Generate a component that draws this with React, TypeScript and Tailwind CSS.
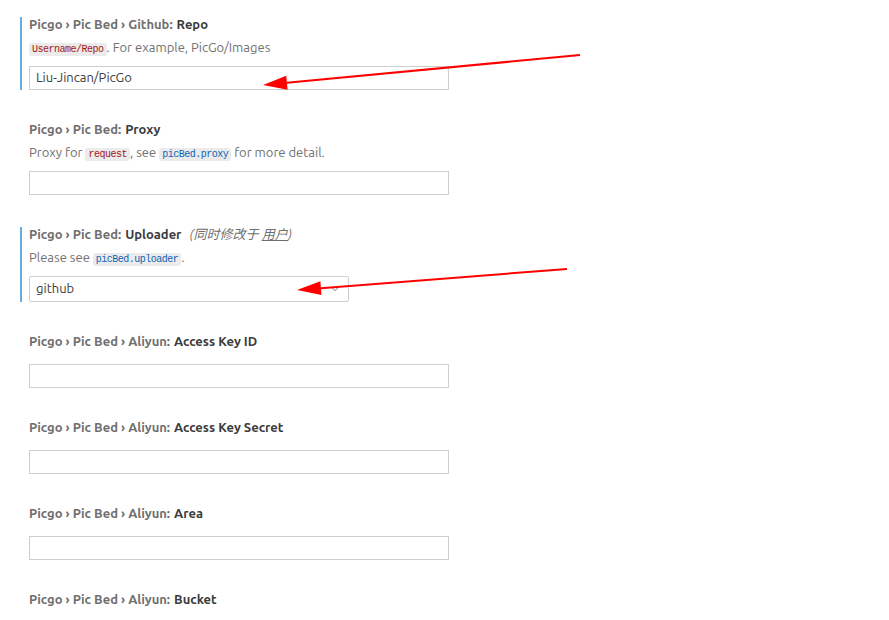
import { ChevronDown } from "lucide-react";

const font = { fontFamily: "Ubuntu, 'Noto Sans', 'Noto Sans CJK SC', sans-serif" };

const Code = ({ children, tone }: { children: string; tone: "red" | "blue" }) => (
  <code
    className={`rounded-[3px] bg-[#ebebeb] px-[3px] py-[1px] text-[10px] tracking-[-0.5px] font-['Liberation_Mono',monospace] ${
      tone === "red" ? "text-[#a31515]" : "text-[#0f63b5]"
    }`}
  >
    {children}
  </code>
);

const Title = ({ path, name, extra }: { path: string; name: string; extra?: boolean }) => (
  <div className="flex h-[14px] items-center text-[13px] leading-[14px] font-bold text-[#6f6f6f]">
    <span>{path}</span>
    <span className="ml-[4px] text-[#3c3c3c]">{name}</span>
    {extra && (
      <span className="ml-[8px] font-normal italic text-[#6f6f6f]">
        (同时修改于 <span className="underline">用户</span>)
      </span>
    )}
  </div>
);

const Input = ({ value }: { value?: string }) => (
  <div className="flex h-[24px] w-[420px] items-center border border-[#cecece] bg-white px-[6px] text-[13px] text-[#3b3b3b]">
    {value}
  </div>
);

const Setting = ({
  path,
  name,
  desc,
  modified,
  children,
  extra,
}: {
  path: string;
  name: string;
  desc?: React.ReactNode;
  modified?: boolean;
  extra?: boolean;
  children: React.ReactNode;
}) => (
  <div
    className={`mb-[32px] border-l-2 pl-[7px] ${modified ? "border-[#68ace0]" : "border-transparent"}`}
  >
    <Title path={path} name={name} extra={extra} />
    {desc ? (
      <div className="mt-[7px] mb-[10px] h-[18px] text-[13px] leading-[18px] text-[#717171]">
        {desc}
      </div>
    ) : (
      <div className="h-[16px]" />
    )}
    {children}
  </div>
);

const Arrow = ({ x1, y1, x2, y2 }: { x1: number; y1: number; x2: number; y2: number }) => {
  const ang = Math.atan2(y2 - y1, x2 - x1);
  const len = 24;
  const w = 7;
  const bx = x2 - len * Math.cos(ang);
  const by = y2 - len * Math.sin(ang);
  const px = -Math.sin(ang) * w;
  const py = Math.cos(ang) * w;
  return (
    <>
      <line x1={x1} y1={y1} x2={bx} y2={by} stroke="#ff0000" strokeWidth={2} />
      <polygon
        points={`${x2},${y2} ${bx + px},${by + py} ${bx - px},${by - py}`}
        fill="#ff0000"
      />
    </>
  );
};

export default function App() {
  return (
    <div className="relative h-[620px] w-[889px] overflow-hidden bg-white" style={font}>
      <div className="pt-[17px] pl-[20px]">
        <Setting
          modified
          path="Picgo › Pic Bed › Github:"
          name="Repo"
          desc={
            <>
              <Code tone="red">Username/Repo</Code>. For example, PicGo/Images
            </>
          }
        >
          <Input value="Liu-Jincan/PicGo" />
        </Setting>
        <Setting
          path="Picgo › Pic Bed:"
          name="Proxy"
          desc={
            <>
              Proxy for <Code tone="red">request</Code>, see <Code tone="blue">picBed.proxy</Code> for
              more detail.
            </>
          }
        >
          <Input />
        </Setting>
        <Setting
          modified
          extra
          path="Picgo › Pic Bed:"
          name="Uploader"
          desc={
            <>
              Please see <Code tone="blue">picBed.uploader</Code>.
            </>
          }
        >
          <div className="flex h-[26px] w-[320px] items-center justify-between rounded-[2px] border border-[#cecece] bg-white pr-[6px] pl-[6px] text-[13px] text-[#3b3b3b]">
            <span>github</span>
            <ChevronDown size={14} strokeWidth={1.5} className="text-[#616161]" />
          </div>
        </Setting>
        <Setting path="Picgo › Pic Bed › Aliyun:" name="Access Key ID">
          <Input />
        </Setting>
        <Setting path="Picgo › Pic Bed › Aliyun:" name="Access Key Secret">
          <Input />
        </Setting>
        <Setting path="Picgo › Pic Bed › Aliyun:" name="Area">
          <Input />
        </Setting>
        <Setting path="Picgo › Pic Bed › Aliyun:" name="Bucket">
          <Input />
        </Setting>
      </div>
      <svg className="pointer-events-none absolute top-0 left-0" width={889} height={620}>
        <Arrow x1={580} y1={55} x2={263} y2={85} />
        <Arrow x1={567} y1={269} x2={297} y2={290} />
      </svg>
    </div>
  );
}
